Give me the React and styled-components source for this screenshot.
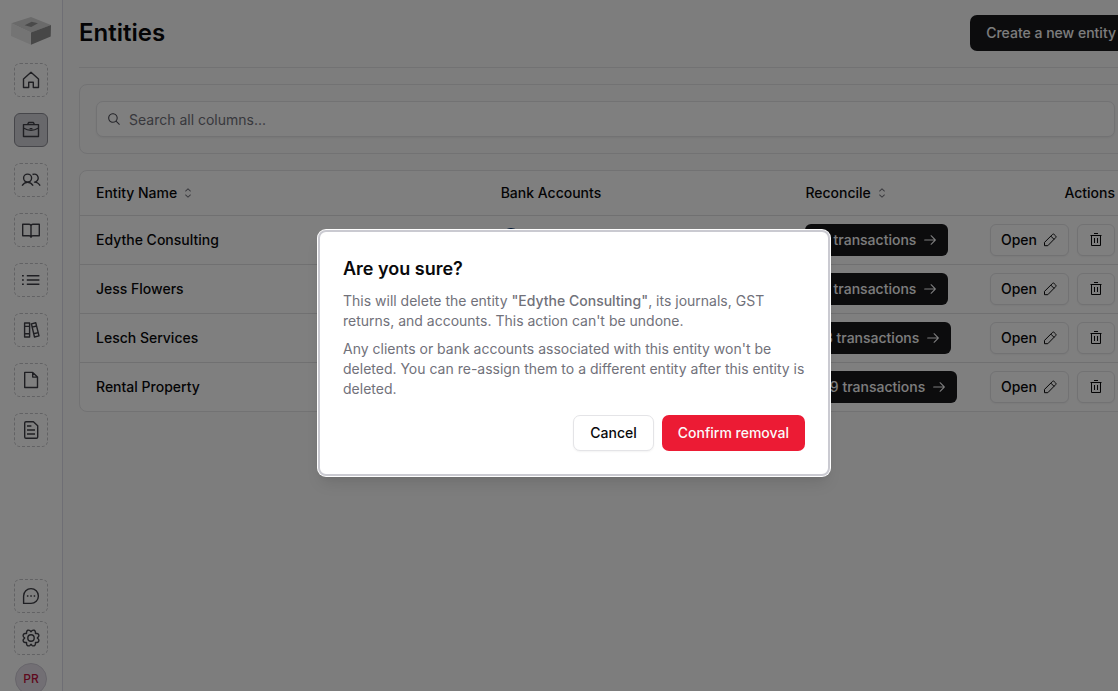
import React from "react";
import styled, { createGlobalStyle, css } from "styled-components";
import { RxArrowRight, RxCaretSort, RxMagnifyingGlass } from "react-icons/rx";

const GlobalStyle = createGlobalStyle`
  *, *::before, *::after { box-sizing: border-box; }
  body {
    margin: 0;
    overflow: hidden;
    background: #fafafa;
    color: #09090b;
    font-family: Inter, "Liberation Sans", sans-serif;
    font-size: 14px;
    line-height: 20px;
  }
  h1, h2, p { margin: 0; }
  button, input { font: inherit; color: inherit; }
  svg { display: block; flex: none; }
`;

const Shell = styled.div`
  position: relative;
  display: flex;
  min-width: 1148px;
  min-height: max(100vh, 706px);
`;

/* Sidebar */

const Sidebar = styled.nav`
  display: flex;
  flex-direction: column;
  align-items: center;
  width: 63px;
  flex: none;
  padding: 16px 0 11px;
  background: #fff;
  border-right: 1px solid #dcdce8;
`;

const LogoLink = styled.a`
  display: block;
  margin-bottom: 17px;
`;

const NavGroup = styled.div`
  display: flex;
  flex-direction: column;
  align-items: center;
  gap: ${(p) => p.$gap}px;
`;

const NavFooter = styled(NavGroup)`
  margin-top: auto;
`;

const NavLink = styled.a`
  display: grid;
  place-items: center;
  width: 34px;
  height: 34px;
  border: 1px dashed #c4c4c8;
  border-radius: 6px;
  color: #3f3f46;
  ${(p) =>
    p.$active &&
    css`
      background: #d0d0d6;
      border: 1px solid #8c8c94;
    `}
`;

const Avatar = styled.button`
  width: 32px;
  height: 32px;
  padding: 0;
  border: 1px solid #cfcbd6;
  border-radius: 50%;
  background: #e4dfe8;
  color: #be123c;
  font-size: 12px;
  font-weight: 500;
`;

/* Main area */

const Main = styled.main`
  display: flex;
  flex-direction: column;
  gap: 16px;
  flex: 1;
  min-width: 0;
  padding: 0 16px 16px;
`;

const PageHeader = styled.header`
  display: flex;
  align-items: center;
  justify-content: space-between;
  height: 68px;
  padding-bottom: 1px;
  border-bottom: 1px solid #e4e4e7;
`;

const PageTitle = styled.h1`
  font-size: 24px;
  line-height: 32px;
  font-weight: 600;
`;

const variants = {
  primary: css`
    border: 0;
    background: #18181b;
    color: #fafafa;
  `,
  outline: css`
    background: #fff;
    border: 1px solid #e4e4e7;
    color: #09090b;
    box-shadow: 0 1px 2px rgba(0, 0, 0, 0.05);
  `,
  danger: css`
    border: 0;
    background: #ec1b34;
    color: #fafafa;
  `,
};

const Button = styled.button`
  display: inline-flex;
  align-items: center;
  justify-content: center;
  gap: 6px;
  height: ${(p) => (p.$small ? 32 : 36)}px;
  padding: 0 ${(p) => (p.$small ? 10 : 16)}px;
  border-radius: ${(p) => (p.$small ? 6 : 7)}px;
  font-weight: 500;
  white-space: nowrap;
  ${(p) => variants[p.$variant]}
`;

const Card = styled.section`
  background: #fff;
  border: 1px solid #e4e4e7;
  border-radius: 8px;
`;

const SearchCard = styled(Card)`
  padding: 16px;
  background: #fafafa;
`;

const SearchField = styled.label`
  display: flex;
  align-items: center;
  gap: 7px;
  height: 36px;
  padding: 0 9px;
  background: #fff;
  border: 1px solid #e4e4e7;
  border-radius: 7px;
  color: #52525b;
  box-shadow: 0 1px 2px rgba(0, 0, 0, 0.05);
`;

const SearchInput = styled.input`
  flex: 1;
  min-width: 0;
  padding: 2px 0 0;
  border: 0;
  outline: 0;
  background: transparent;
  &::placeholder { color: #71717a; opacity: 1; }
`;

const Table = styled.table`
  width: 100%;
  table-layout: fixed;
  border-collapse: separate;
  border-spacing: 0;
  font-weight: 500;
`;

const HeadCell = styled.th`
  width: ${(p) => p.$width || "auto"};
  height: 45px;
  padding: 0 16px;
  border-bottom: 1px solid #e0e0e3;
  font-weight: 500;
  text-align: ${(p) => p.$align || "left"};
`;

const SortLabel = styled.span`
  display: flex;
  align-items: center;
  gap: 3px;
  svg { color: #71717a; }
`;

const Cell = styled.td`
  padding: 8px 16px;
  border-bottom: 1px solid #e0e0e3;
  tr:last-child & { border-bottom: 0; }
`;

const RowActions = styled.div`
  display: flex;
  justify-content: flex-end;
  gap: 8px;
`;

/* Dialog */

const Overlay = styled.div`
  position: absolute;
  inset: 0;
  display: grid;
  place-items: center;
  background: rgba(0, 0, 0, 0.5);
`;

const Dialog = styled.div`
  width: 100%;
  max-width: 512px;
  padding: 23px;
  background: #fff;
  border: 2px solid #cacad1;
  border-radius: 8px;
  box-shadow: 0 0 0 1px #fff, 0 10px 15px -3px rgba(0, 0, 0, 0.1),
    0 4px 6px -4px rgba(0, 0, 0, 0.1);
`;

const DialogTitle = styled.h2`
  font-size: 18px;
  line-height: 28px;
  font-weight: 600;
`;

const DialogText = styled.p`
  margin-top: 8px;
  color: #71717a;
  strong { font-weight: 500; }
`;

const DialogActions = styled.div`
  display: flex;
  justify-content: flex-end;
  gap: 8px;
  margin-top: 16px;
`;

/* Drawings */

const Logo = () => (
  <svg width="40" height="30" viewBox="0 0 40 30" aria-hidden="true">
    <path d="M.4 7.3 20 1l20 8-20 7.4Z" fill="#d4d4d4" />
    <path d="M.4 7.3 20 16.4v12.3L0 20Z" fill="#e8e8e8" />
    <path d="m20 16.4 20-7.4-.3 11.6L20 28.7Z" fill="#8e8e8e" />
    <path d="m13.6 9.2 7-3.5 6.4 1.6-6.8 3.7Z" fill="#949494" />
  </svg>
);

const Icon = ({ children }) => (
  <svg
    width="20"
    height="20"
    viewBox="0 0 20 20"
    fill="none"
    stroke="currentColor"
    strokeWidth="1.4"
    strokeLinejoin="round"
    aria-hidden="true"
  >
    {children}
  </svg>
);

const HomeIcon = () => (
  <Icon>
    <path d="M2.5 9 10 2.2 17.5 9v8.5h-5.2v-5.3H7.7v5.3H2.5Z" />
  </Icon>
);
const BriefcaseIcon = () => (
  <Icon>
    <path d="M2.5 4.6h15v11.9h-15ZM6.6 4.6l1-2.1h4.8l1 2.1M2.5 8c4.6 2.9 10.4 2.9 15 0M8.6 8.6h2.8" />
  </Icon>
);
const UsersIcon = () => (
  <Icon>
    <circle cx="6.6" cy="8.1" r="4" />
    <path d="M1.1 15.7c1.4-2.3 3.3-3.5 5.5-3.5s4.1 1.2 5.5 3.5M11.5 4.5a4 4 0 1 1 2 7.6c2.2 0 4.2 1.2 5.6 3.6" />
  </Icon>
);
const BookIcon = () => (
  <Icon>
    <path d="M10 6c0-1.2-.8-1.8-2-1.8H1.7v11.6H8c1.2 0 2 .6 2 2M10 6c0-1.2.8-1.8 2-1.8h6.3v11.6H12c-1.2 0-2 .6-2 2M10 6v11.8" />
  </Icon>
);
const ListIcon = () => (
  <Icon>
    <path d="M1 5.7h1.8M5.8 5.7h12.6M1 10h1.8M5.8 10h12.6M1 14.3h1.8M5.8 14.3h12.6" />
  </Icon>
);
const BooksIcon = () => (
  <Icon>
    <path d="M3.6 3h5v14h-5ZM3.6 6.4h5M3.6 13.8h5M10.4 3.9l4.4-1.1L18 15.9l-4.5 1.1ZM11.2 7.1l4.4-1.1M12.7 13.7l4.5-1.1" />
  </Icon>
);
const FileIcon = () => (
  <Icon>
    <path d="M3.7 2.4h8l4.8 4.7v10.4H3.7ZM11.7 2.4v4.7h4.8" />
  </Icon>
);
const FileTextIcon = () => (
  <Icon>
    <path d="M5 1.8h7.4l4.3 4v11.1c0 .8-.5 1.3-1.3 1.3H5c-.8 0-1.3-.5-1.3-1.3V3.1c0-.8.5-1.3 1.3-1.3ZM6 6h4.4M6 10h8M6 14h8" />
  </Icon>
);
const ChatIcon = () => (
  <Icon>
    <path d="M2.6 17.4V10A7.4 7.4 0 1 1 10 17.4Z" />
    <path d="M5.9 10h1.5M9.3 10h1.5M12.7 10h1.5" strokeWidth="1.5" />
  </Icon>
);

const gearPath = (() => {
  const point = (angle, radius) =>
    `${(10 + radius * Math.cos(angle)).toFixed(2)} ${(10 + radius * Math.sin(angle)).toFixed(2)}`;
  const step = Math.PI / 4;
  let d = "";
  for (let i = 0; i < 8; i += 1) {
    const a = i * step + step / 2;
    d += `${i ? "L" : "M"}${point(a - 0.24, 7.5)}A2 2 0 0 1 ${point(a + 0.24, 7.5)}L${point(a + 0.39, 6.3)}`;
  }
  return `${d}Z`;
})();

const GearIcon = () => (
  <Icon>
    <path d={gearPath} />
    <circle cx="10" cy="10" r="3.2" />
  </Icon>
);

const TrashIcon = () => (
  <svg width="16" height="16" viewBox="0 0 16 16" fill="none" stroke="currentColor" aria-hidden="true">
    <path d="M2.5 3.5h11M3.5 3.5v10h9v-10M6 1.5h4M6.5 6v5M9.5 6v5" />
  </svg>
);

const PencilIcon = () => (
  <svg
    width="15"
    height="14"
    viewBox="0 0 15 14"
    fill="none"
    stroke="currentColor"
    strokeLinejoin="round"
    aria-hidden="true"
  >
    <path d="M1.5 12.7V9.4l7.9-7.9c.6-.6 1.2-.6 1.8 0l1.4 1.4c.6.6.6 1.2 0 1.8l-7.8 8ZM7.8 3.1l3.3 3.3" />
  </svg>
);

const BankMark = () => (
  <svg width="20" height="24" viewBox="0 0 20 24" role="img" aria-label="Bank">
    <circle cx="10" cy="10" r="10" fill="#002f6c" />
  </svg>
);

const navItems = [
  { label: "Home", Glyph: HomeIcon },
  { label: "Entities", Glyph: BriefcaseIcon, active: true },
  { label: "Clients", Glyph: UsersIcon },
  { label: "Journals", Glyph: BookIcon },
  { label: "Transactions", Glyph: ListIcon },
  { label: "Accounts", Glyph: BooksIcon },
  { label: "Files", Glyph: FileIcon },
  { label: "Reports", Glyph: FileTextIcon },
];

const footerItems = [
  { label: "Feedback", Glyph: ChatIcon },
  { label: "Settings", Glyph: GearIcon },
];

const entities = [
  { name: "Edythe Consulting", count: 12, bank: true },
  { name: "Jess Flowers", count: 15 },
  { name: "Lesch Services", count: 23 },
  { name: "Rental Property", count: 129 },
];

const NavItem = ({ label, Glyph, active }) => (
  <NavLink href="#" aria-label={label} aria-current={active ? "page" : undefined} $active={active}>
    <Glyph />
  </NavLink>
);

export default function App() {
  return (
    <>
      <GlobalStyle />
      <Shell>
        <Sidebar>
          <LogoLink href="#" aria-label="Dashboard">
            <Logo />
          </LogoLink>
          <NavGroup $gap={16}>
            {navItems.map((item) => (
              <NavItem key={item.label} {...item} />
            ))}
          </NavGroup>
          <NavFooter $gap={8}>
            {footerItems.map((item) => (
              <NavItem key={item.label} {...item} />
            ))}
            <Avatar type="button">PR</Avatar>
          </NavFooter>
        </Sidebar>

        <Main>
          <PageHeader>
            <PageTitle>Entities</PageTitle>
            <Button type="button" $variant="primary">Create a new entity</Button>
          </PageHeader>

          <SearchCard>
            <SearchField>
              <RxMagnifyingGlass size={16} />
              <SearchInput type="text" aria-label="Search all columns" placeholder="Search all columns..." />
            </SearchField>
          </SearchCard>

          <Card>
            <Table>
              <thead>
                <tr>
                  <HeadCell $width="38.5%">
                    <SortLabel>Entity Name <RxCaretSort size={16} /></SortLabel>
                  </HeadCell>
                  <HeadCell $width="29%">Bank Accounts</HeadCell>
                  <HeadCell>
                    <SortLabel>Reconcile <RxCaretSort size={16} /></SortLabel>
                  </HeadCell>
                  <HeadCell $align="right">Actions</HeadCell>
                </tr>
              </thead>
              <tbody>
                {entities.map((entity) => (
                  <tr key={entity.name}>
                    <Cell>{entity.name}</Cell>
                    <Cell>{entity.bank && <BankMark />}</Cell>
                    <Cell>
                      <Button type="button" $small $variant="primary">
                        {entity.count} transactions <RxArrowRight size={16} />
                      </Button>
                    </Cell>
                    <Cell>
                      <RowActions>
                        <Button type="button" $small $variant="outline">
                          Open <PencilIcon />
                        </Button>
                        <Button type="button" $small $variant="outline" aria-label={`Delete ${entity.name}`}>
                          <TrashIcon />
                        </Button>
                      </RowActions>
                    </Cell>
                  </tr>
                ))}
              </tbody>
            </Table>
          </Card>
        </Main>

        <Overlay>
          <Dialog role="alertdialog" aria-modal="true" aria-labelledby="confirm-title">
            <DialogTitle id="confirm-title">Are you sure?</DialogTitle>
            <DialogText>
              This will delete the entity <strong>"Edythe Consulting"</strong>, its journals, GST
              returns, and accounts. This action can't be undone.
            </DialogText>
            <DialogText>
              Any clients or bank accounts associated with this entity won't be deleted. You can
              re-assign them to a different entity after this entity is deleted.
            </DialogText>
            <DialogActions>
              <Button type="button" $variant="outline">Cancel</Button>
              <Button type="button" $variant="danger">Confirm removal</Button>
            </DialogActions>
          </Dialog>
        </Overlay>
      </Shell>
    </>
  );
}
